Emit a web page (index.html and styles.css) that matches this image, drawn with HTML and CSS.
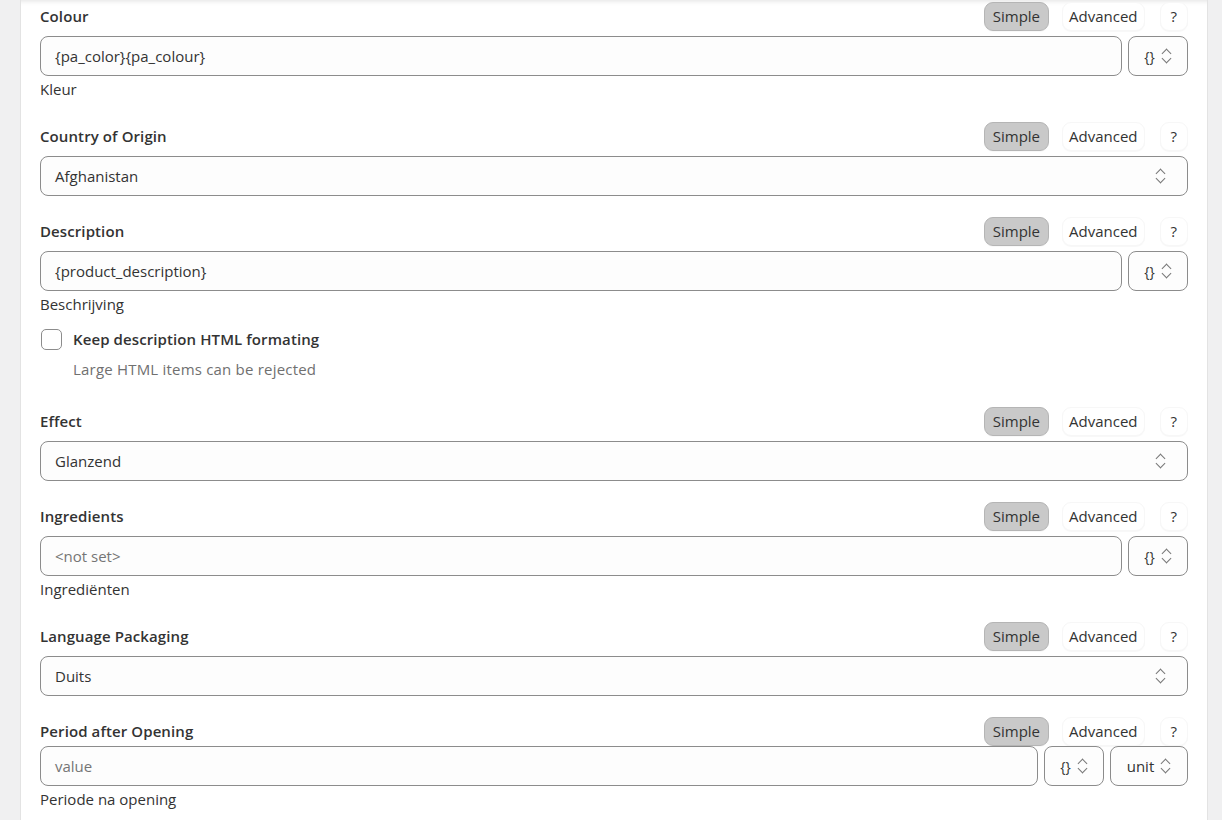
FILE: index.html
```html
<!DOCTYPE html>
<html lang="en">
<head>
    <meta charset="UTF-8">
    <meta name="viewport" content="width=device-width, initial-scale=1.0">
    <title>Attribute mapping</title>
    <link rel="stylesheet" href="styles.css">
</head>
<body>
    <div class="panel">

        <div class="field has-help">
            <div class="field-head">
                <label class="field-label">Colour</label>
                <div class="mode">
                    <button class="mode-btn active">Simple</button>
                    <button class="mode-btn">Advanced</button>
                    <button class="mode-btn help">?</button>
                </div>
            </div>
            <div class="field-row">
                <div class="input">{pa_color}{pa_colour}</div>
                <div class="picker">{}<span class="chev"></span></div>
            </div>
            <div class="field-help">Kleur</div>
        </div>

        <div class="field">
            <div class="field-head">
                <label class="field-label">Country of Origin</label>
                <div class="mode">
                    <button class="mode-btn active">Simple</button>
                    <button class="mode-btn">Advanced</button>
                    <button class="mode-btn help">?</button>
                </div>
            </div>
            <div class="field-row">
                <div class="input select">Afghanistan<span class="chev"></span></div>
            </div>
        </div>

        <div class="field has-help">
            <div class="field-head">
                <label class="field-label">Description</label>
                <div class="mode">
                    <button class="mode-btn active">Simple</button>
                    <button class="mode-btn">Advanced</button>
                    <button class="mode-btn help">?</button>
                </div>
            </div>
            <div class="field-row">
                <div class="input">{product_description}</div>
                <div class="picker">{}<span class="chev"></span></div>
            </div>
            <div class="field-help">Beschrijving</div>
            <div class="option">
                <span class="checkbox"></span>
                <div>
                    <div class="option-label">Keep description HTML formating</div>
                    <div class="option-note">Large HTML items can be rejected</div>
                </div>
            </div>
        </div>

        <div class="field">
            <div class="field-head">
                <label class="field-label">Effect</label>
                <div class="mode">
                    <button class="mode-btn active">Simple</button>
                    <button class="mode-btn">Advanced</button>
                    <button class="mode-btn help">?</button>
                </div>
            </div>
            <div class="field-row">
                <div class="input select">Glanzend<span class="chev"></span></div>
            </div>
        </div>

        <div class="field has-help">
            <div class="field-head">
                <label class="field-label">Ingredients</label>
                <div class="mode">
                    <button class="mode-btn active">Simple</button>
                    <button class="mode-btn">Advanced</button>
                    <button class="mode-btn help">?</button>
                </div>
            </div>
            <div class="field-row">
                <div class="input placeholder">&lt;not set&gt;</div>
                <div class="picker">{}<span class="chev"></span></div>
            </div>
            <div class="field-help">Ingrediënten</div>
        </div>

        <div class="field">
            <div class="field-head">
                <label class="field-label">Language Packaging</label>
                <div class="mode">
                    <button class="mode-btn active">Simple</button>
                    <button class="mode-btn">Advanced</button>
                    <button class="mode-btn help">?</button>
                </div>
            </div>
            <div class="field-row">
                <div class="input select">Duits<span class="chev"></span></div>
            </div>
        </div>

        <div class="field has-help compact">
            <div class="field-head">
                <label class="field-label">Period after Opening</label>
                <div class="mode">
                    <button class="mode-btn active">Simple</button>
                    <button class="mode-btn">Advanced</button>
                    <button class="mode-btn help">?</button>
                </div>
            </div>
            <div class="field-row">
                <div class="input placeholder">value</div>
                <div class="picker">{}<span class="chev"></span></div>
                <div class="picker unit">unit<span class="chev"></span></div>
            </div>
            <div class="field-help">Periode na opening</div>
        </div>

    </div>
</body>
</html>
```

FILE: styles.css
```css
* {
    box-sizing: border-box;
}
body {
    font-family: "Open Sans", "Noto Sans", sans-serif;
    font-size: 14px;
    color: #333;
    background-color: #f0f0f1;
    margin: 0;
    padding: 0 14px 0 20px;
    height: 820px;
    overflow: hidden;
}
.panel {
    background: white;
    border-left: 1px solid #e3e3e3;
    border-right: 1px solid #e3e3e3;
    box-shadow: inset 0 6px 5px -5px rgba(0, 0, 0, 0.12);
    padding: 1px 19px 0 19px;
    min-height: 820px;
}
.field {
    margin-bottom: 20px;
}
.field-head {
    display: flex;
    justify-content: space-between;
    align-items: center;
    height: 30px;
    margin-bottom: 5px;
}
/* unit fields sit tighter under their header */
.field.compact .field-head {
    margin-bottom: 0;
}
.field-label {
    font-weight: 600;
    font-size: 15px;
    letter-spacing: 0.1px;
}
.mode {
    display: flex;
    gap: 13px;
}
.mode-btn {
    font-family: inherit;
    font-size: 15px;
    color: #333;
    background: white;
    border: 1px solid #f7f7f7;
    border-radius: 9px;
    height: 29px;
    padding: 0 6px;
    box-shadow: 0 1px 1px rgba(0, 0, 0, 0.03);
}
.mode-btn.active {
    background: #c9c9c9;
    border-color: #b5b5b5;
    padding: 0 8px;
}
.mode-btn.help {
    padding: 0 10px;
    margin-left: 2px;
}
.field-row {
    display: flex;
    gap: 6px;
}
.input {
    flex: 1;
    height: 40px;
    display: flex;
    align-items: center;
    padding: 0 14px;
    border: 1px solid #8c8c8c;
    border-radius: 8px;
    background: #fdfdfd;
    font-size: 15px;
}
.input.placeholder {
    color: #757575;
}
.input.select {
    justify-content: space-between;
}
.picker {
    width: 60px;
    height: 40px;
    display: flex;
    align-items: center;
    justify-content: center;
    gap: 5px;
    border: 1px solid #8c8c8c;
    border-radius: 8px;
    background: #fdfdfd;
    font-size: 14px;
}
.picker.unit {
    width: 78px;
    font-size: 15px;
}
/* stacked up / down chevrons */
.chev {
    position: relative;
    width: 12px;
    height: 18px;
}
.chev::before,
.chev::after {
    content: "";
    position: absolute;
    left: 3px;
    width: 6px;
    height: 6px;
    border-left: 1.6px solid #777;
    border-top: 1.6px solid #777;
}
.chev::before {
    top: 3px;
    transform: rotate(45deg);
}
.chev::after {
    bottom: 3px;
    transform: rotate(225deg);
}
.input.select .chev {
    margin-right: 7px;
}
.field-help {
    padding: 3px 0 2px;
    line-height: 20px;
    font-size: 15px;
}
.option {
    display: flex;
    gap: 11px;
    padding: 12px 0 6px 1px;
}
.checkbox {
    width: 21px;
    height: 21px;
    border: 1px solid #8c8c8c;
    border-radius: 5px;
    margin-top: 1px;
}
.option-label {
    font-weight: 600;
    font-size: 15px;
    line-height: 22px;
    letter-spacing: 0.1px;
}
.option-note {
    color: #707070;
    font-size: 15px;
    line-height: 22px;
    margin-top: 8px;
    letter-spacing: 0.2px;
}
```
